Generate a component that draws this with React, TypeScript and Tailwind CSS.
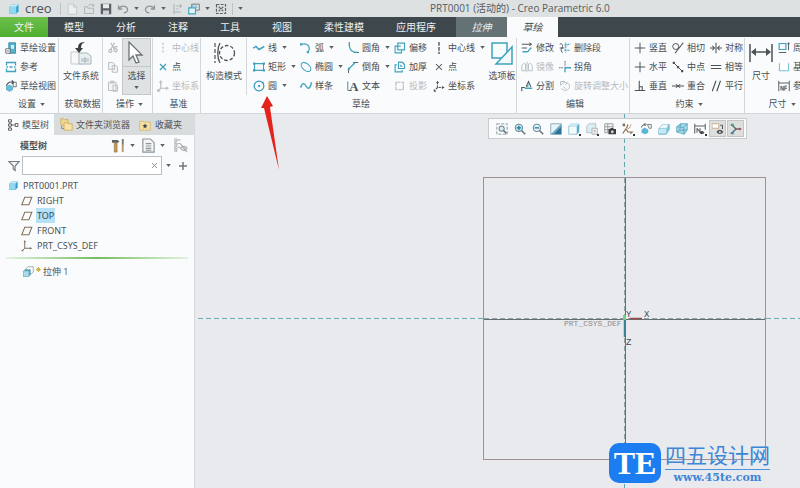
import React from "react";

const T = "#3fa3bd";
const G = "#4b5356";
const L = "#b9bfc2";

const icons: Record<string, React.ReactNode> = {
  cube: (
    <>
      <path d="M2 5l3-3h9v9l-3 3H2z" fill="#2f9fc9" />
      <path d="M2 5h9v9H2z" fill="#8fd8ef" />
      <path d="M2 5l3-3h9l-3 3z" fill="#c9effa" />
    </>
  ),
  newDoc: <path d="M3 1.5h7l4 4V15H3zM10 1.5v4h4" fill="#eceff0" stroke="#bcc1c3" />,
  open: <path d="M2 14V5h4l1 2h7v7zM8 4c1-3 5-3 6 0M12 3l2 1 1-2" fill="none" stroke="#b3b8ba" strokeWidth="1.4" />,
  save: (
    <>
      <path d="M1 1h14v14H1z" fill="#5c6366" />
      <path d="M4 1.5h8V7H4z" fill="#e9ecee" />
      <path d="M4 10h8v5H4z" fill="#cfd4d6" />
    </>
  ),
  undo: <path d="M2 3v5h5M2 8c3-5 10-5 12 0 .5 3-2 5-5 5" fill="none" stroke="#8f969a" strokeWidth="1.7" />,
  redo: <path d="M14 3v5H9M14 8C11 3 4 3 2 8c-.5 3 2 5 5 5" fill="none" stroke="#8f969a" strokeWidth="1.7" />,
  regen: <path d="M4 1v14M4 12h9M7 4h3M7 8h3M12 2l2 2-2 2M13 4H9" fill="none" stroke="#b0b5b8" strokeWidth="1.5" />,
  windows: (
    <>
      <path d="M5 1.5h10v8H5z" fill="#eef1f2" stroke={G} />
      <path d="M1 6.5h9v8H1z" fill="#dff3f8" stroke={T} strokeWidth="1.5" />
      <path d="M5 4h7M12 4v3" stroke={T} fill="none" />
    </>
  ),
  close: <path d="M2 2h12v12H2zM5 5l6 6M11 5l-6 6" fill="none" stroke="#5f666a" strokeWidth="1.6" strokeDasharray="4 1.5" />,
  setup: (
    <>
      <path d="M5 1h9v14H5z" fill="#58b2cc" stroke="#2d7f9b" />
      <path d="M8 4h4v5H8z" fill="#d8f2f9" />
      <path d="M1 9h6v6H1zM2 12h4" fill="#fff" stroke={G} />
    </>
  ),
  refs: <path d="M2 6V2h12v4M2 10v4h12v-4M2 8h2M6 8h4M12 8h2" fill="none" stroke={T} strokeWidth="1.7" />,
  sketchView: (
    <>
      <path d="M2 8c1-5 5-6 8-5M9 .5L11.500 3 9 5.500" fill="none" stroke={G} strokeWidth="1.5" />
      <path d="M11 3h4v6h-4z" fill="none" stroke={G} />
      <path d="M2 9l4-2 4 2v4l-4 2-4-2z" fill="#69bdd5" stroke={T} />
    </>
  ),
  files: (
    <>
      <path d="M2 11h8l4 4v8H2z" fill="#f7f8f9" stroke="#c3c9cc" />
      <path d="M10 12h8l4 3v8H10zM12 18h8M12 20h8M16 16v6" fill="#e9f0f3" stroke="#aab5ba" />
      <path d="M16 1c-5 0-7 2-7 6H6l4 5 4-5h-2c0-3 1-5 4-6z" fill="#393f42" />
    </>
  ),
  cut: (
    <path d="M5 1l5 9M10 1L5 10M2.500 12a2 2 0 104 0 2 2 0 10-4 0M9.500 11a2 2 0 104 0 2 2 0 10-4 0M8 7l6-1" fill="none" stroke={L} strokeWidth="1.700" />
  ),
  copy: <path d="M2 2h6l2 2v7H2zM7 6h5l2 2v7H7z" fill="#f2f4f5" stroke={L} strokeWidth="1.300" />,
  paste: <path d="M2 3h10v11H2zM5 1.500h4V4H5zM8 7h6v8H8z" fill="#f2f4f5" stroke={L} strokeWidth="1.300" />,
  pointer: <path d="M4 1l13 13h-6l3 7-3 1-3-7-4 4z" fill="#fff" stroke="#6b7275" strokeWidth="1.300" />,
  centerGray: <path d="M8 1v14" stroke={L} strokeWidth="1.600" strokeDasharray="3 2" />,
  center: <path d="M8 0v16" stroke={G} strokeWidth="1.800" strokeDasharray="5 1.500" />,
  pointTeal: <path d="M4 4l8 8M12 4l-8 8" stroke={T} strokeWidth="1.700" />,
  point: <path d="M4 4l8 8M12 4l-8 8" stroke={G} strokeWidth="1.400" />,
  csysGray: <path d="M5 2v9h9M5 11l-3 3M3.500 4L5 1.500 6.500 4M12 9.500l2.500 1.500-2.500 1.500M1 12v3h3" fill="none" stroke={L} strokeWidth="1.600" />,
  csys: (
    <>
      <path d="M6 3v7h7M6 10l-4 4" fill="none" stroke={G} strokeWidth="1.500" strokeDasharray="3 1.200" />
      <path d="M4 4l2-3 2 3zM12 8l3.500 2-3.500 2zM1 12v3.500h3.500z" fill={G} />
    </>
  ),
  construct: (
    <>
      <path d="M3 2v20" stroke={G} strokeDasharray="4 2" strokeWidth="1.200" />
      <circle cx="15" cy="12" r="7.500" fill="none" stroke={G} strokeDasharray="3.500 2" strokeWidth="1.300" />
      <path d="M8 2c-3 5-3 15 0 20" fill="none" stroke={G} strokeWidth="1.300" />
    </>
  ),
  line: <path d="M0 8l4-2 4 4 7-4" fill="none" stroke={T} strokeWidth="2" />,
  rect: (
    <>
      <path d="M2 3.500h12v9H2z" fill="none" stroke={T} strokeWidth="1.400" />
      <path d="M0 2h3v3H0zM13 2h3v3h-3zM0 11h3v3H0zM13 11h3v3h-3z" fill={T} />
    </>
  ),
  circle: (
    <>
      <circle cx="8" cy="8" r="6.500" fill="none" stroke="#3596bd" strokeWidth="1.600" />
      <circle cx="8" cy="8" r="1.500" fill="#3596bd" />
      <path d="M11 3l3-1v3z" fill="#3596bd" />
    </>
  ),
  arc: (
    <>
      <path d="M2 3c7-2 13 2 9 10" fill="none" stroke={T} strokeWidth="1.700" />
      <path d="M0 1.500h3v3H0zM9 12h3v3H9z" fill={T} />
    </>
  ),
  ellipse: <ellipse cx="8" cy="8" rx="7.500" ry="4.500" transform="rotate(40 8 8)" fill="none" stroke={T} strokeWidth="1.500" />,
  spline: <path d="M1 10c2-7 5-6 7-2s5 5 7-3M0 9h2M14 4h2" fill="none" stroke={T} strokeWidth="1.800" />,
  fillet: (
    <>
      <path d="M3 0v5M9 14h7" stroke={G} strokeWidth="1.200" />
      <path d="M3 3c0 7 3 11 11 11" fill="none" stroke={T} strokeWidth="1.700" />
    </>
  ),
  chamfer: (
    <>
      <path d="M2 16V9M8 2h7" stroke={G} strokeWidth="1.200" />
      <path d="M2 11l9-9" stroke={T} strokeWidth="1.700" />
      <path d="M1 10h2.500v2.500H1z" fill={T} />
    </>
  ),
  text: <path d="M1 2v12M1 14h4" fill="none" stroke={T} strokeWidth="1.500" />,
  offset: (
    <>
      <path d="M5 1.500h9v9H5z" fill="none" stroke={T} strokeWidth="1.500" />
      <path d="M9 5.500H1.500v9H10V11" fill="none" stroke={T} strokeWidth="1.500" />
    </>
  ),
  thicken: (
    <>
      <path d="M6 1.500h4a5 5 0 014 5V10H6zM9 5v2h2" fill="none" stroke={T} strokeWidth="1.500" />
      <path d="M4 5H1.500v9.500H11V12" fill="none" stroke={T} strokeWidth="1.500" />
    </>
  ),
  project: <path d="M2.500 3h10v10h-10z" fill="none" stroke={L} strokeWidth="1.600" strokeDasharray="6 1" />,
  palette: (
    <>
      <path d="M2 2h15v15H2z" fill="#f8fbfc" stroke={T} strokeWidth="1.500" />
      <path d="M22 6v17H6z" fill="#f2fafc" stroke={T} strokeWidth="1.500" />
    </>
  ),
  modify: (
    <>
      <path d="M1 3h13M11 1l3 2-3 2M1 8h7" fill="none" stroke={G} strokeWidth="1.300" />
      <path d="M2 13h6c3 0 3-5 6-5" fill="none" stroke={T} strokeWidth="1.700" />
    </>
  ),
  mirror: <path d="M8 1v14M6 4c-4-2-5 2-5 4v5h5zM10 4c4-2 5 2 5 4v5h-5z" fill="none" stroke={L} strokeWidth="1.300" />,
  divide: (
    <>
      <path d="M1 15v-5h4M7 9l3-7 3 7" fill="none" stroke={G} strokeWidth="1.400" />
      <path d="M5 11h10M9 5v4" stroke={T} strokeWidth="1.800" />
    </>
  ),
  del: (
    <>
      <path d="M1 3c3-2 5 2 3 5s-1 5 1 6M1 8h6" fill="none" stroke={G} strokeWidth="1.300" />
      <path d="M7 4h4M9 1v13M11 4l4-2M7 11h8" stroke={T} strokeWidth="1.400" strokeDasharray="3 1" />
    </>
  ),
  corner: (
    <>
      <path d="M8 0v7M0 9h6" stroke={G} strokeWidth="1.200" strokeDasharray="2 1" />
      <path d="M8 15V9h8" fill="none" stroke={T} strokeWidth="1.800" />
    </>
  ),
  rotate: <path d="M2 2h6M2 2v5M3 7c1-5 11-5 11 1s-8 8-11 3M8 7l3-3M6 9l3 3" fill="none" stroke={L} strokeWidth="1.300" />,
  vert: <path d="M8 1v14M1 8h14" stroke={G} strokeWidth="1.300" />,
  perp: <path d="M7 1v13M1 14h14M7 9h4v5" fill="none" stroke={G} strokeWidth="1.400" />,
  tangent: (
    <>
      <circle cx="5" cy="6" r="4" fill="none" stroke={G} strokeWidth="1.300" />
      <path d="M4 15L15 1" stroke={G} strokeWidth="1.500" />
    </>
  ),
  mid: (
    <>
      <path d="M2 2l12 12" stroke={G} strokeWidth="1.300" />
      <path d="M1 1h3v3H1zM6.500 6.500h3v3h-3zM12 12h3v3h-3z" fill={G} />
    </>
  ),
  coincide: <path d="M0 8h5M11 8h5M5 6l3 2-3 2M11 6L8 8l3 2" fill="none" stroke={G} strokeWidth="1.400" />,
  sym: <path d="M8 1v14M0 8h5M11 8h5M3 5l3 3-3 3M13 5l-3 3 3 3" fill="none" stroke={G} strokeWidth="1.400" />,
  equal: <path d="M1 6h14M1 10h14" stroke={G} strokeWidth="1.400" />,
  parallel: <path d="M3 15L8 1M9 15l5-14" stroke={G} strokeWidth="1.500" />,
  dimension: (
    <>
      <path d="M1 3v18M23 3v18M3 11h18" stroke={G} strokeWidth="1.500" />
      <path d="M2 11l5-4v8zM22 11l-5-4v8z" fill={G} />
    </>
  ),
  perimeter: (
    <>
      <path d="M1.500 2h9v8h-9z" fill="none" stroke={T} strokeWidth="1.600" />
      <path d="M14 1v10M1 14h10M12.500 3L14 1l1.500 2" fill="none" stroke={G} strokeWidth="1.200" />
    </>
  ),
  baseline: <path d="M2 3v10h12V3" fill="#fff" stroke="#7fbfd2" strokeWidth="1.500" />,
  refDim: <path d="M1 1v14M15 1v14M1 4h14M4 8v6M4 8l3 6V8M9 14V8h3M9 11h3" fill="none" stroke={G} strokeWidth="1.200" />,
  tree: (
    <>
      <path d="M4 3v10M4 8h7M4 3h2" stroke="#555" fill="none" strokeWidth="1.200" />
      <path d="M2 1h4v3H2zM2 6.500h4v3H2zM2 12h4v3H2zM11 6h3.500v4H11z" fill="#fff" stroke="#555" strokeWidth="1.200" />
    </>
  ),
  folders: (
    <>
      <path d="M1 1h4l1 1h4v7H1z" fill="#f0d68c" stroke="#c8a04c" strokeWidth=".8" />
      <path d="M5 6h4l1 1h5v8H5z" fill="#f7e3a8" stroke="#c8a04c" strokeWidth=".8" />
      <path d="M2 10v3h3" fill="none" stroke="#777" />
    </>
  ),
  favorite: (
    <>
      <path d="M1 3h5l1 1h8v11H1z" fill="#f5e0a4" stroke="#d3b361" />
      <path d="M8 6l1 2 2.500.500-2 1.500.500 2.500-2-1.500-2 1.500.500-2.500-2-1.500L7 8z" fill="#3e4244" />
    </>
  ),
  tools: (
    <>
      <path d="M1 2h6l2 2-2 1H1z" fill="#5d6163" />
      <path d="M3.500 5h3v10h-3z" fill="#c99a55" stroke="#8d6a35" strokeWidth=".600" />
      <path d="M12.500 1v14" stroke="#b99a66" strokeWidth="2" />
      <path d="M12.500 1v6" stroke="#777" strokeWidth="1.500" />
    </>
  ),
  listDoc: <path d="M2 1h8l4 4v10H2zM5 6h6M5 8.500h6M5 11h6M5 13h6" fill="#f5f6f7" stroke="#8c9396" strokeWidth="1.200" />,
  treeEye: (
    <>
      <path d="M2 1v13M5 2h3M5 6h3M5 10h3M2 1h2v3H2zM2 6h2v3H2zM2 11h2v3H2z" fill="none" stroke="#b4b8ba" strokeWidth="1.200" />
      <path d="M8 11c2-3 5-3 7 0-2 3-5 3-7 0zM8 6l7 9" fill="#e4e6e7" stroke="#a5aaac" strokeWidth="1.200" />
    </>
  ),
  funnel: <path d="M1 2h14l-5.500 6v6L7 12V8z" fill="#f1f2f3" stroke="#767c7f" strokeWidth="1.500" />,
  plane: <path d="M5 3h9.500l-4 10H1z" fill="none" stroke="#84715a" strokeWidth="1.400" />,
  treeCsys: (
    <>
      <path d="M5 2v9h8M5 11l-3 3" fill="none" stroke="#7a6a58" strokeWidth="1.300" />
      <path d="M3.500 3L5 0l1.500 3zM12 9.500l3 1.500-3 1.500zM1 12v3h3z" fill="#7a6a58" />
    </>
  ),
  extrude: (
    <>
      <path d="M5 4l3-3h7v7l-3 3H5z" fill="#fff" stroke="#6d7f88" strokeWidth=".8" />
      <path d="M2 7l2-2h7v6l-2 3H2z" fill="#58aac8" stroke="#3f7f98" strokeWidth=".8" />
      <path d="M2 7h7v7H2z" fill="#a8dcec" />
    </>
  ),
  zoomFit: (
    <>
      <path d="M1 1h14v14H1z" fill="#f1f5f7" stroke="#8d989c" strokeWidth="1.200" strokeDasharray="4 2" />
      <circle cx="7.500" cy="7.500" r="3.500" fill="#d5eef6" stroke="#55666d" strokeWidth="1.200" />
      <path d="M10 10l4 4" stroke="#55666d" strokeWidth="1.800" />
    </>
  ),
  zoomIn: (
    <>
      <circle cx="6.500" cy="6.500" r="5" fill="#cdeaf4" stroke="#587984" strokeWidth="1.200" />
      <path d="M10 10l5 5" stroke="#657277" strokeWidth="2" />
      <path d="M3.500 6.500h6M6.500 3.500v6" stroke="#16799e" strokeWidth="1.700" />
    </>
  ),
  zoomOut: (
    <>
      <circle cx="6.500" cy="6.500" r="5" fill="#e3f2f7" stroke="#587984" strokeWidth="1.200" />
      <path d="M10 10l5 5" stroke="#657277" strokeWidth="2" />
      <path d="M3.500 6.500h6" stroke="#16799e" strokeWidth="1.700" />
    </>
  ),
  repaint: (
    <>
      <path d="M1 1h14v14H1z" fill="#e8f4f8" stroke="#7499a8" />
      <path d="M15 3v12H3z" fill="#2f6f92" />
      <path d="M12 4l3-3v4L5 15H1z" fill="#64abc8" />
    </>
  ),
  shade: (
    <>
      <path d="M1 4l3-3h11v11l-3 3H1z" fill="#52b1d0" />
      <path d="M1 4h11v11H1z" fill="#f3fafc" stroke="#7db5c7" strokeWidth=".8" />
      <path d="M1 4l3-3h11l-3 3z" fill="#c8eaf4" />
    </>
  ),
  saved: (
    <>
      <path d="M1 4l3-3h9v9l-3 3H1z" fill="#dceef4" stroke="#9fb9c2" />
      <path d="M8 7h7v8H8zM10 10h3M10 12h3" fill="#f4f4f4" stroke="#a0a4a6" />
    </>
  ),
  viewMgr: (
    <>
      <path d="M1 1h11v12H1zM1 5h11M1 9h11M5 1v12" fill="#f4f4f4" stroke="#84898c" />
      <path d="M6 8h2l1-1.500h3L13 8h3v7H6z" fill="#3a3e40" />
      <circle cx="11" cy="11.500" r="2" fill="#c9ced0" />
    </>
  ),
  datum: (
    <>
      <path d="M1 1l3 3M4 1L1 4M8 2l-2 5M1 14l4-6 3 4h7M11 14l2-1" fill="none" stroke="#87694a" strokeWidth="1.500" />
      <path d="M12 2l-2 5-3 1" fill="none" stroke="#b38652" strokeWidth="1.300" strokeDasharray="2 1" />
    </>
  ),
  orient: (
    <>
      <path d="M2 9l4-3 5 3v4l-4 2-5-2z" fill="#58b5d3" />
      <path d="M2 6c0-3 3-4 5-4M6 0l2 2-2 2" fill="none" stroke="#42535a" strokeWidth="1.300" />
      <path d="M10 2h5v5h-3z" fill="#f4f4f4" stroke="#5a6266" />
    </>
  ),
  section: (
    <>
      <path d="M1 8l5-6h9v7l-4 6H1z" fill="#7fc8de" stroke="#51a0ba" strokeWidth=".8" />
      <path d="M1 8h10v6H1z" fill="#c5e9f3" />
      <path d="M2 7l4-5h8l-3 5z" fill="#ebf8fb" />
    </>
  ),
  wire: (
    <>
      <path d="M1 5l5-4h9v8l-4 6-10-3z" fill="#a4d9e8" stroke="#4c9cb7" />
      <path d="M1 5l9 1 5-5M10 6l1 9M6 1l-1 9-4 2M5 10l10-1" fill="none" stroke="#4c9cb7" />
    </>
  ),
  annot: (
    <>
      <path d="M1 1v13M15 1v8M1 4h14M4 7v6M4 7l4 5V7" fill="none" stroke="#5b6164" strokeWidth="1.400" />
      <path d="M7 13c2-3 5-3 7 0-2 2.500-5 2.500-7 0z" fill="#4b5154" />
    </>
  ),
  noteEye: (
    <>
      <path d="M0 1h9v6H0z" fill="#fff" stroke="#b59d76" />
      <path d="M11 3h3v5" fill="none" stroke="#4b5154" strokeWidth="1.300" />
      <path d="M6 12c2-4 7-4 9 0-2 3.500-7 3.500-9 0z" fill="#4b5154" />
      <circle cx="10.500" cy="12" r="1.300" fill="#dcdedd" />
    </>
  ),
  spin: (
    <>
      <path d="M3 3l5 5-5 5" fill="none" stroke="#4b6a70" strokeWidth="1.800" />
      <path d="M8 8h6" stroke="#70585a" strokeWidth="1.800" />
      <path d="M1 1h4v3H1z" fill="#4a9b76" />
      <path d="M1 12h4v3H1z" fill="#3c8eb0" />
      <path d="M12 6l4 2-4 2z" fill="#a84e49" />
    </>
  ),
};

const big = new Set(["files", "pointer", "construct", "palette", "dimension"]);

function Icon({ name, className = "size-3" }: { name: string; className?: string }) {
  return (
    <svg viewBox={big.has(name) ? "0 0 24 24" : "0 0 16 16"} className={`shrink-0 ${className}`} aria-hidden="true">
      {icons[name]}
      {name === "text" && (
        <text x="3" y="14" fontSize="17" fontWeight="700" fontFamily="Liberation Serif, serif" fill={G}>
          A
        </text>
      )}
    </svg>
  );
}

function Caret() {
  return (
    <svg viewBox="0 0 6 4" className="h-[3px] w-[5px] shrink-0" aria-hidden="true">
      <path d="M0 0h6L3 4z" fill="#5a6063" />
    </svg>
  );
}

type Cmd = { icon: string; label: string; caret?: boolean; off?: boolean };

function Col({ items }: { items: Cmd[] }) {
  return (
    <div className="flex shrink-0 flex-col">
      {items.map((c) => (
        <button
          key={c.label}
          type="button"
          disabled={c.off}
          className="flex h-[19px] items-center gap-[3px] whitespace-nowrap disabled:text-[#b6babd]"
        >
          <Icon name={c.icon} />
          <span>{c.label}</span>
          {c.caret && (
            <span className="pl-[2px]">
              <Caret />
            </span>
          )}
        </button>
      ))}
    </div>
  );
}

function Group({
  label,
  caret,
  className,
  children,
}: {
  label: string;
  caret?: boolean;
  className: string;
  children: React.ReactNode;
}) {
  return (
    <section className={`flex shrink-0 flex-col ${className}`}>
      <div className="flex h-[57px]">{children}</div>
      <div className="flex h-[18px] items-center justify-center gap-1">
        {label}
        {caret && <Caret />}
      </div>
    </section>
  );
}

function BigButton({ icon, label }: { icon: string; label: string }) {
  return (
    <button type="button" className="flex shrink-0 flex-col items-center gap-1 whitespace-nowrap pt-[3px]">
      <Icon name={icon} className="size-6" />
      <span className="leading-[14px]">{label}</span>
    </button>
  );
}

const sep = "border-r border-[#d3d7da]";

function TitleBar() {
  const items = ["newDoc", "open", "save", "undo", "-", "redo", "-", "regen", "windows", "-", "close"];
  return (
    <header className="grid h-[17px] grid-cols-[430px_1fr] items-center bg-[#dde1e2]">
      <div className="flex items-center gap-[5px] pl-2">
        <Icon name="cube" />
        <span className="w-[30px] text-[13px] leading-none text-[#4b5154]">creo</span>
        <span className="h-3 w-px bg-[#bcc2c4]" />
        {items.map((n, i) =>
          n === "-" ? (
            <Caret key={i} />
          ) : (
            <button key={i} type="button" aria-label={n}>
              <Icon name={n} className="size-3" />
            </button>
          ),
        )}
        <span className="h-3 w-px bg-[#bcc2c4]" />
        <Caret />
      </div>
      <h1 className="whitespace-nowrap text-[10px] leading-[17px] text-[#555c60]">
        PRT0001 (活动的) - Creo Parametric 6.0
      </h1>
    </header>
  );
}

function Tabs() {
  return (
    <nav className="flex h-5 bg-[#3e474b] text-[10px] text-[#eef0f1]">
      <button type="button" className="w-12 bg-linear-to-b from-[#6cc04a] to-[#4fae30]">
        文件
      </button>
      {["模型", "分析", "注释", "工具", "视图", "柔性建模", "应用程序"].map((t) => (
        <button key={t} type="button" className="shrink-0 px-4">
          {t}
        </button>
      ))}
      <button type="button" className="ml-1 w-[51px] bg-[#647175] italic">
        拉伸
      </button>
      <button type="button" className="w-[51px] bg-[#fafbfd] italic text-[#3f4648]">
        草绘
      </button>
    </nav>
  );
}

function Ribbon() {
  return (
    <div className="flex overflow-hidden border-b border-[#d2d5d8] bg-[#fafbfd] pt-px text-[9px] leading-[12px] text-[#464d50]">
      <Group label="设置" caret className={`w-[59px] pl-[5px] ${sep}`}>
        <Col
          items={[
            { icon: "setup", label: "草绘设置" },
            { icon: "refs", label: "参考" },
            { icon: "sketchView", label: "草绘视图" },
          ]}
        />
      </Group>
      <Group label="获取数据" className={`w-11 pl-1 ${sep}`}>
        <BigButton icon="files" label="文件系统" />
      </Group>
      <Group label="操作" caret className={`w-[50px] pl-1 ${sep}`}>
        <div className="flex shrink-0 flex-col">
          {["cut", "copy", "paste"].map((n) => (
            <button key={n} type="button" aria-label={n} className="flex h-[19px] items-center">
              <Icon name={n} />
            </button>
          ))}
        </div>
        <button
          type="button"
          className="ml-[3px] flex w-[29px] flex-col items-center border border-[#c3c7c9] bg-[#dfe2e3]"
        >
          <span className="flex h-7 w-full items-center justify-center border-b border-[#c3c7c9]">
            <Icon name="pointer" className="size-6" />
          </span>
          <span className="pt-[3px]">选择</span>
          <span className="pt-1">
            <Caret />
          </span>
        </button>
      </Group>
      <Group label="基准" className={`w-12 pl-1 ${sep}`}>
        <Col
          items={[
            { icon: "centerGray", label: "中心线", off: true },
            { icon: "pointTeal", label: "点" },
            { icon: "csysGray", label: "坐标系", off: true },
          ]}
        />
      </Group>
      <Group label="草绘" className={`w-[316px] pl-[5px] ${sep}`}>
        <div className="grid grid-cols-[47px_47px_47px_47px_39px_54px_30px]">
          <div className={`flex ${sep} mr-[6px]`}>
            <BigButton icon="construct" label="构造模式" />
          </div>
          <Col
            items={[
              { icon: "line", label: "线", caret: true },
              { icon: "rect", label: "矩形", caret: true },
              { icon: "circle", label: "圆", caret: true },
            ]}
          />
          <Col
            items={[
              { icon: "arc", label: "弧", caret: true },
              { icon: "ellipse", label: "椭圆", caret: true },
              { icon: "spline", label: "样条" },
            ]}
          />
          <Col
            items={[
              { icon: "fillet", label: "圆角", caret: true },
              { icon: "chamfer", label: "倒角", caret: true },
              { icon: "text", label: "文本" },
            ]}
          />
          <Col
            items={[
              { icon: "offset", label: "偏移" },
              { icon: "thicken", label: "加厚" },
              { icon: "project", label: "投影", off: true },
            ]}
          />
          <Col
            items={[
              { icon: "center", label: "中心线", caret: true },
              { icon: "point", label: "点" },
              { icon: "csys", label: "坐标系" },
            ]}
          />
          <BigButton icon="palette" label="选项板" />
        </div>
      </Group>
      <Group label="编辑" className={`w-[113px] pl-1 ${sep}`}>
        <div className="flex gap-[5px]">
          <Col
            items={[
              { icon: "modify", label: "修改" },
              { icon: "mirror", label: "镜像", off: true },
              { icon: "divide", label: "分割" },
            ]}
          />
          <Col
            items={[
              { icon: "del", label: "删除段" },
              { icon: "corner", label: "拐角" },
              { icon: "rotate", label: "旋转调整大小", off: true },
            ]}
          />
        </div>
      </Group>
      <Group label="约束" caret className={`w-[115px] pl-1 ${sep}`}>
        <div className="flex gap-[5px]">
          <Col
            items={[
              { icon: "vert", label: "竖直" },
              { icon: "vert", label: "水平" },
              { icon: "perp", label: "垂直" },
            ]}
          />
          <Col
            items={[
              { icon: "tangent", label: "相切" },
              { icon: "mid", label: "中点" },
              { icon: "coincide", label: "重合" },
            ]}
          />
          <Col
            items={[
              { icon: "sym", label: "对称" },
              { icon: "equal", label: "相等" },
              { icon: "parallel", label: "平行" },
            ]}
          />
        </div>
      </Group>
      <Group label="尺寸" caret className="w-[70px] pl-1">
        <div className="flex gap-[5px]">
          <BigButton icon="dimension" label="尺寸" />
          <Col
            items={[
              { icon: "perimeter", label: "周长" },
              { icon: "baseline", label: "基线" },
              { icon: "refDim", label: "参考" },
            ]}
          />
        </div>
      </Group>
    </div>
  );
}

function ModelTree() {
  return (
    <aside className="flex w-[195px] shrink-0 flex-col border-r border-[#d5d8da] bg-[#fafbfd] text-[#4d5356]">
      <div className="flex h-[21px] bg-[#d9dcdd] text-[9px]">
        <button type="button" className="flex w-[54px] items-center gap-[3px] bg-[#fafbfd] pl-[7px]">
          <Icon name="tree" />
          模型树
        </button>
        <button type="button" className="flex w-[79px] items-center gap-[3px] pl-[6px]">
          <Icon name="folders" className="size-[13px]" />
          文件夹浏览器
        </button>
        <button type="button" className="flex items-center gap-1 pl-[6px]">
          <Icon name="favorite" />
          收藏夹
        </button>
      </div>
      <div className="flex h-[21px] items-center pl-5 text-[9px]">
        <h2 className="w-[91px] font-bold">模型树</h2>
        <button type="button" aria-label="设置" className="flex items-center gap-1">
          <Icon name="tools" className="size-[15px]" />
          <Caret />
        </button>
        <button type="button" aria-label="显示" className="ml-[6px] flex items-center gap-1">
          <Icon name="listDoc" className="size-[15px]" />
          <Caret />
        </button>
        <button type="button" aria-label="树列" className="ml-2">
          <Icon name="treeEye" className="size-[15px]" />
        </button>
      </div>
      <div className="flex h-[19px] items-center pl-2">
        <Icon name="funnel" />
        <div className="ml-[2px] flex h-[19px] w-[140px] items-center border border-[#bcc0c3] bg-white pr-1">
          <input aria-label="过滤" className="h-full w-full min-w-0 bg-transparent px-1 text-[10px] outline-none" />
          <button type="button" aria-label="清除">
            <svg viewBox="0 0 6 6" className="size-[5px]">
              <path d="M0 0l6 6M6 0L0 6" stroke="#7b8184" />
            </svg>
          </button>
        </div>
        <span className="ml-1">
          <Caret />
        </span>
        <button type="button" aria-label="添加" className="ml-2">
          <svg viewBox="0 0 8 8" className="size-2">
            <path d="M4 0v8M0 4h8" stroke="#74797c" strokeWidth="1.500" />
          </svg>
        </button>
      </div>
      <ul className="pt-[3px] font-['Noto_Sans','Noto_Sans_CJK_SC',sans-serif] text-[9px] leading-[15px]">
        <li className="flex h-[15px] items-center gap-1 pl-2">
          <Icon name="cube" className="size-[11px]" />
          PRT0001.PRT
        </li>
        {["RIGHT", "TOP", "FRONT"].map((n) => (
          <li key={n} className="flex h-[15px] items-center gap-1 pl-[21px]">
            <Icon name="plane" />
            <span className={n === "TOP" ? "-mx-px bg-[#b5e0f6] px-px text-[#2f4d60]" : ""}>{n}</span>
          </li>
        ))}
        <li className="flex h-[15px] items-center gap-1 pl-[21px]">
          <Icon name="treeCsys" />
          PRT_CSYS_DEF
        </li>
      </ul>
      <div className="mx-[6px] mt-1 h-[2px] bg-linear-to-r from-[#e4f1e0] via-[#72bd5e] to-[#e4f1e0]" />
      <div className="flex h-[25px] items-center gap-[2px] pl-[22px] text-[9px]">
        <Icon name="extrude" />
        <svg viewBox="0 0 6 6" className="mb-1 size-[5px]">
          <path d="M3 0v6M0 3h6M1 1l4 4M5 1L1 5" stroke="#c5a92e" />
        </svg>
        拉伸 1
      </div>
    </aside>
  );
}

function ViewToolbar() {
  const tools = ["zoomFit", "zoomIn", "zoomOut", "repaint", "shade", "saved", "viewMgr", "datum", "orient", "section", "wire", "annot", "noteEye", "spin"];
  const menus = ["shade", "saved", "datum", "annot"];
  return (
    <div className="absolute right-[53px] top-1 flex h-[21px] items-center gap-px border border-[#c9cccf] bg-[#fafbfc] pl-1 pr-[2px]">
      {tools.map((n) => (
        <button
          key={n}
          type="button"
          aria-label={n}
          className={`relative flex h-[17px] w-[17px] items-center justify-center border ${
            n === "noteEye" || n === "spin" ? "border-[#c2c5c5] bg-[#dedfdd]" : "border-transparent"
          }`}
        >
          <Icon name={n} />
          {menus.includes(n) && <span className="absolute bottom-0 right-0 size-[2px] bg-[#333]" />}
        </button>
      ))}
    </div>
  );
}

function Viewport() {
  return (
    <main className="relative min-w-0 flex-1 overflow-hidden bg-[#e9eaee]">
      <svg viewBox="0 0 605 374" className="absolute inset-0 h-full w-full" role="img" aria-label="PRT_CSYS_DEF">
        <rect x="288.500" y="63.500" width="282" height="282" fill="none" stroke="#a08f95" />
        <path d="M3 204.500h285M571 204.500h34" stroke="#6fa9b6" strokeDasharray="5 3" />
        <path d="M429.500 0v63M429.500 346v28" stroke="#61a8ac" strokeDasharray="5 3" />
        <path d="M289 204.500h281M429.500 64v281" stroke="#8fa5a8" strokeDasharray="5 3" />
        <path d="M289 205.500h281M430.500 64v281" stroke="#667073" />
        <path d="M435 204.500h12" stroke="#9c4a4d" strokeWidth="1.500" />
        <path d="M429.500 206v17" stroke="#3d8194" strokeWidth="1.500" />
        <path d="M428 201h3v5h-3z" fill="#6fd287" />
        <g fontFamily="Liberation Mono, monospace" fill="#8d898d">
          <text x="369" y="212" fontSize="8">
            PRT_CSYS_DEF
          </text>
          <g fontSize="9" fill="#43494c">
            <text x="431" y="203">Y</text>
            <text x="449" y="203">X</text>
            <text x="431" y="231">Z</text>
          </g>
        </g>
      </svg>
      <ViewToolbar />
      <div className="absolute bottom-1 right-[30px] flex items-center gap-1">
        <div className="flex h-10 w-[52px] items-center justify-center rounded-[10px] bg-[#1b7df0] font-['Liberation_Serif',serif] text-[32px] font-bold leading-none text-white">
          TE
        </div>
        <div className="flex flex-col text-[#3c86d8]">
          <span className="pb-[3px] font-['Noto_Sans_CJK_SC',sans-serif] text-[21px] leading-[24px]">四五设计网</span>
          <span className="border-t border-[#4c92de] pt-px text-center font-['DejaVu_Serif',serif] text-[11px] font-bold leading-[13px]">
            www.45te.com
          </span>
        </div>
      </div>
    </main>
  );
}

export default function App() {
  return (
    <div className="relative flex min-h-screen flex-col overflow-hidden bg-[#e9eaee] font-['Open_Sans','Noto_Sans_CJK_SC',sans-serif]">
      <TitleBar />
      <Tabs />
      <Ribbon />
      <div className="flex flex-1">
        <ModelTree />
        <Viewport />
      </div>
      <svg viewBox="0 0 20 76" className="pointer-events-none absolute left-[260px] top-[95px] h-[76px] w-5" aria-hidden="true">
        <path d="M7 1l6 10-3 1 9 63L4 13l-3 0z" fill="#e3241c" />
      </svg>
    </div>
  );
}
